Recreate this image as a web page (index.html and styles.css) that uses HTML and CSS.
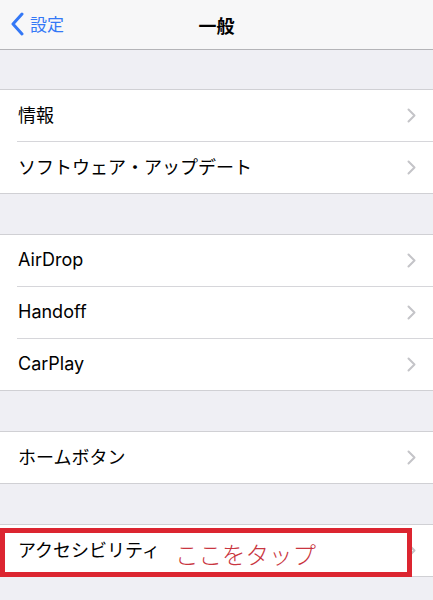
FILE: index.html
```html
<!DOCTYPE html>
<html lang="ja">
<head>
    <meta charset="UTF-8">
    <meta name="viewport" content="width=device-width, initial-scale=1.0">
    <title>一般</title>
    <link rel="stylesheet" href="styles.css">
</head>
<body>

    <header class="navbar">
        <a class="back" href="#">
            <svg class="back-icon" width="14" height="24" viewBox="0 0 14 24">
                <polyline points="12,2 3,12 12,22" fill="none" stroke="#3478f6" stroke-width="3" stroke-linecap="round" stroke-linejoin="round"/>
            </svg>
            <span>設定</span>
        </a>
        <h1 class="title">一般</h1>
    </header>

    <section class="group first">
        <div class="row"><div class="row-body"><span>情報</span><i class="chevron"></i></div></div>
        <div class="row"><div class="row-body"><span>ソフトウェア・アップデート</span><i class="chevron"></i></div></div>
    </section>

    <section class="group">
        <div class="row"><div class="row-body"><span>AirDrop</span><i class="chevron"></i></div></div>
        <div class="row"><div class="row-body"><span>Handoff</span><i class="chevron"></i></div></div>
        <div class="row"><div class="row-body"><span>CarPlay</span><i class="chevron"></i></div></div>
    </section>

    <section class="group">
        <div class="row"><div class="row-body"><span>ホームボタン</span><i class="chevron"></i></div></div>
    </section>

    <section class="group">
        <div class="row marked">
            <div class="row-body"><span>アクセシビリティ</span><i class="chevron"></i></div>
            <div class="callout"><span>ここをタップ</span></div>
        </div>
    </section>

    <script>
        // chevrons share one svg
        document.querySelectorAll('.chevron').forEach(el => {
            el.innerHTML = '<svg width="9" height="15" viewBox="0 0 9 15"><polyline points="1.5,1.5 7.5,7.5 1.5,13.5" fill="none" stroke="#c4c4c8" stroke-width="2" stroke-linecap="round" stroke-linejoin="round"/></svg>';
        });
    </script>

</body>
</html>
```

FILE: styles.css
```css
body {
    margin: 0;
    background-color: #efeff4;
    font-family: "Inter", "Noto Sans CJK JP", sans-serif;
    color: #000;
    height: 600px;
    overflow: hidden;
}
.navbar {
    position: relative;
    height: 49px;
    background-color: #f7f7f8;
    border-bottom: 1px solid #b4b4b8;
    display: flex;
    align-items: center;
    justify-content: center;
}
.back {
    position: absolute;
    left: 10px;
    top: 12px;
    display: flex;
    align-items: center;
    gap: 6px;
    color: #3478f6;
    text-decoration: none;
    font-size: 17px;
    font-family: "Noto Sans CJK JP", sans-serif;
}
.back span {
    line-height: 24px;
}
.title {
    margin: 0;
    font-size: 18px;
    font-weight: bold;
    font-family: "Noto Sans CJK JP", sans-serif;
}
.group {
    margin-top: 40px;
    background-color: #fff;
    border-top: 1px solid #d0d0d4;
    border-bottom: 1px solid #d0d0d4;
}
.group.first {
    margin-top: 39px;
}
.row {
    padding-left: 17px;
}
.row-body {
    height: 48px;
    padding-bottom: 3px;
    display: flex;
    align-items: center;
    justify-content: space-between;
    padding-right: 17px;
    font-size: 18px;
    padding-left: 1px;
}
.row + .row .row-body {
    border-top: 1px solid #d6d6da;
}
.chevron {
    display: flex;
    margin-top: 2px;
}
.marked {
    position: relative;
}
.callout {
    position: absolute;
    left: 0;
    top: 3px;
    height: 36px;
    width: 232px;
    border: 5px solid #dc2530;
    display: flex;
    align-items: center;
    padding-left: 170px;
    padding-top: 3px;
    box-sizing: content-box;
}
.callout span {
    color: #c93540;
    font-size: 23.5px;
    font-weight: 300;
    font-family: "Noto Sans CJK JP", sans-serif;
}
```
